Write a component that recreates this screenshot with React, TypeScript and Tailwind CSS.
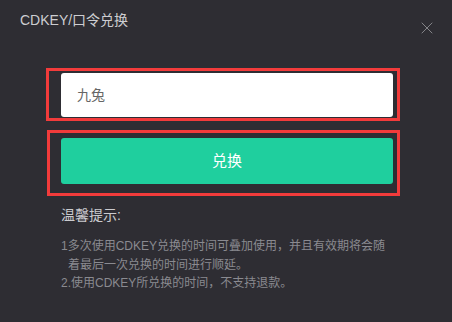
import { X } from 'lucide-react';

const font = 'font-["Liberation_Sans","Noto_Sans_CJK_SC",sans-serif]';

export default function App() {
  return (
    <div className={`relative w-[452px] h-[322px] overflow-hidden bg-[#2e2d33] ${font}`}>
      <div className="flex items-start justify-between h-[20px] mt-[10px] pl-[20px] pr-[15px]">
        <span className="text-[14px] leading-[20px] text-[#cdcdd1]">CDKEY/口令兑换</span>
        <button className="flex mt-[8px] text-[#8c8c90]">
          <X size={20} strokeWidth={1.1} />
        </button>
      </div>

      <div className="ml-[61px] w-[332px] mt-[43px]">
        <input
          placeholder="九兔"
          className="block w-full h-[44px] rounded-[3px] bg-white pl-[16px] text-[14px] text-[#333] placeholder:text-[#666] outline-none"
        />
        <button className="block mt-[21px] w-full h-[46px] rounded-[3px] bg-[#1fcf9e] text-[15px] text-white">兑换</button>

        <div className="mt-[21px] text-[14px] leading-[20px] text-[#cbcbcf]">温馨提示:</div>
        <div className="mt-[12px] text-[12px] leading-[18.5px] text-[#8a8a90] whitespace-nowrap">
          <div>1多次使用CDKEY兑换的时间可叠加使用，并且有效期将会随</div>
          <div className="pl-[7px]">着最后一次兑换的时间进行顺延。</div>
          <div>2.使用CDKEY所兑换的时间，不支持退款。</div>
        </div>
      </div>

      <div className="absolute left-[46px] top-[68px] w-[354px] h-[53px] border-[3px] border-[#f23b3b] pointer-events-none" />
      <div className="absolute left-[47px] top-[130px] w-[353px] h-[66px] border-[3px] border-[#f23b3b] pointer-events-none" />
    </div>
  );
}
